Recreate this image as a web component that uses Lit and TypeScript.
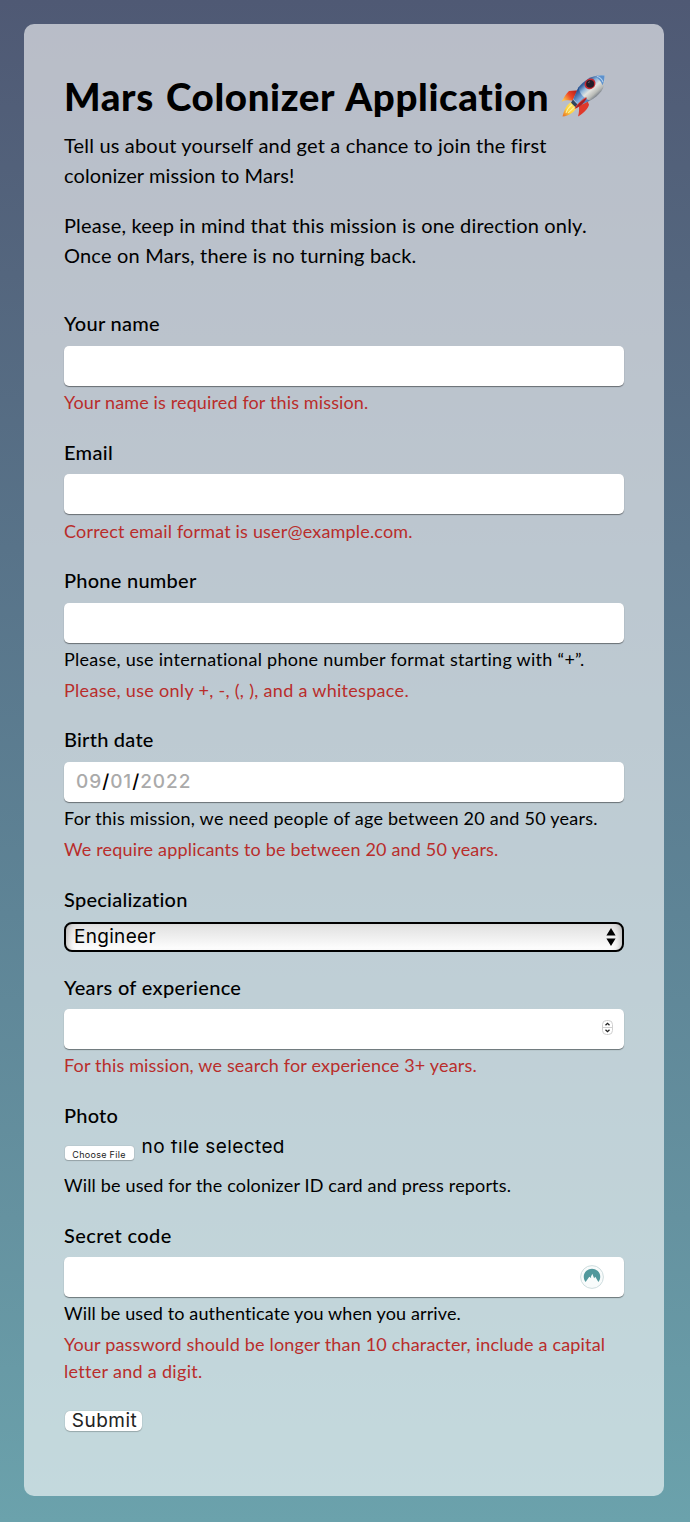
import { LitElement, html, css, svg, nothing } from "lit";
import { customElement } from "lit/decorators.js";
import { styleMap } from "lit/directives/style-map.js";

type Line = [text: string, tracking: number];

interface Field {
  label: Line;
  control: "text" | "date" | "select" | "number" | "file" | "password";
  hint?: Line;
  errors?: Line[];
}

const intro: Line[][] = [
  [
    ["Tell us about yourself and get a chance to join the first", 0.18],
    ["colonizer mission to Mars!", 0.09],
  ],
  [
    ["Please, keep in mind that this mission is one direction only.", 0.175],
    ["Once on Mars, there is no turning back.", 0.195],
  ],
];

const fields: Field[] = [
  {
    label: ["Your name", 0.309],
    control: "text",
    errors: [["Your name is required for this mission.", 0.135]],
  },
  {
    label: ["Email", 0.309],
    control: "text",
    errors: [["Correct email format is user@example.com.", 0.18]],
  },
  {
    label: ["Phone number", 0.25],
    control: "text",
    hint: ["Please, use international phone number format starting with “+”.", 0.28],
    errors: [["Please, use only +, -, (, ), and a whitespace.", 0.3]],
  },
  {
    label: ["Birth date", 0.23],
    control: "date",
    hint: ["For this mission, we need people of age between 20 and 50 years.", 0.245],
    errors: [["We require applicants to be between 20 and 50 years.", 0.174]],
  },
  { label: ["Specialization", 0.246], control: "select" },
  {
    label: ["Years of experience", 0.32],
    control: "number",
    errors: [["For this mission, we search for experience 3+ years.", 0.17]],
  },
  {
    label: ["Photo", 0.203],
    control: "file",
    hint: ["Will be used for the colonizer ID card and press reports.", 0.16],
  },
  {
    label: ["Secret code", 0.4],
    control: "password",
    hint: ["Will be used to authenticate you when you arrive.", 0.12],
    errors: [
      ["Your password should be longer than 10 character, include a capital", 0.178],
      ["letter and a digit.", 0.3],
    ],
  },
];

const line = ([text, tracking]: Line) =>
  html`<span class="line" style=${styleMap({ letterSpacing: `${tracking}px` })}>${text}</span>`;

const rocket = svg`
  <defs>
    <linearGradient id="hull" x1="21" y1="10" x2="33" y2="24" gradientUnits="userSpaceOnUse">
      <stop offset="0" stop-color="#345f9c" />
      <stop offset=".25" stop-color="#8fb5da" />
      <stop offset=".5" stop-color="#e2e3df" />
      <stop offset=".78" stop-color="#b9bbb7" />
      <stop offset="1" stop-color="#6c7480" />
    </linearGradient>
    <linearGradient id="band" x1="14" y1="17" x2="26" y2="30" gradientUnits="userSpaceOnUse">
      <stop offset="0" stop-color="#244d8d" />
      <stop offset=".5" stop-color="#85afe0" />
      <stop offset="1" stop-color="#315b9b" />
    </linearGradient>
    <linearGradient id="fin" x1="15" y1="15" x2="3" y2="25" gradientUnits="userSpaceOnUse">
      <stop offset="0" stop-color="#b51e1c" />
      <stop offset=".5" stop-color="#ec4524" />
      <stop offset="1" stop-color="#ffc44a" />
    </linearGradient>
    <linearGradient id="flame" x1="14" y1="28" x2="3" y2="40" gradientUnits="userSpaceOnUse">
      <stop offset="0" stop-color="#ffe66a" />
      <stop offset=".6" stop-color="#ffd139" />
      <stop offset="1" stop-color="#e9792d" />
    </linearGradient>
  </defs>
  <path d="M18 15 L8 15.5 C5 18 3 22 0.500 26 C5 24 9 25 13 25 Z" fill="url(#fin)" />
  <path d="M26 24 L28 29 C27 33 23 37 17 40.500 C18.500 36 18 33 18 29 Z" fill="#e0392b" />
  <path d="M11 26 C6 28 3 34 1.500 40.500 C8 40 14 36 16 31 Z" fill="url(#flame)" />
  <path d="M11 29 C8 31 6 34 5 37 M14 31 C11 33 9 36 7 37" stroke="#fff2a4" fill="none" />
  <path d="M12 24 L18 30 L15 32 L10 27 Z" fill="#31445e" />
  <path d="M43.500 0.500 C33 -1 23 5 17.500 12 L12 24 L18 30 C29 26 38 21 42 13 C43.500 8 43.800 4 43.500 .5 Z" fill="url(#hull)" />
  <path d="M17.500 12 L12.500 23.500 L18 30 L29 25 C23 23 18.500 18 17.500 12 Z" fill="url(#band)" />
  <path d="M43.500 .5 C40 .3 37 .8 34.500 2 C37 3 40 6 41.500 10 C43 7 43.700 4 43.500 .5 Z" fill="#5d91cd" />
  <path d="M36 1.500 C39 2 41 4 42 7" stroke="#b7d4ef" stroke-width="1" fill="none" />
  <path d="M26 22 C22 23 16 29 13.500 33 C18 32 24 27 26 22 Z" fill="#a91f24" />
  <path d="M25 22 C21 24 17 28 14 32" stroke="#ed5745" stroke-width=".8" fill="none" />
  <ellipse cx="29" cy="8.700" rx="5.700" ry="5" transform="rotate(-35 29 8.700)" fill="#c52a31" />
  <ellipse cx="29.100" cy="8.700" rx="4" ry="3.700" fill="#241c28" />
  <path d="M27 7.500 L29 6.500" stroke="#79616b" stroke-width=".8" />
`;

@customElement("app-root")
export class AppRoot extends LitElement {
  static styles = css`
    :host {
      display: block;
      box-sizing: border-box;
      min-height: 1522px;
      padding: 24px 26px 26px 24px;
      background: linear-gradient(#4f5974 0%, #54667e 18%, #587389 36%, #5e8496 60%, #6592a0 80%, #6ba2ac 100%);
      color: #000;
      font: 400 20px/30px Lato, sans-serif;
    }
    .card {
      box-sizing: border-box;
      height: 1472px;
      padding: 46px 40px 0;
      border-radius: 10px;
      background: rgba(255, 255, 255, 0.6);
    }
    .line {
      display: block;
      white-space: nowrap;
    }
    .title {
      display: flex;
      align-items: center;
      height: 52px;
      margin: 0 0 8px;
      font-size: 38.5px;
      line-height: 52px;
      font-weight: 900;
      letter-spacing: 0.6px;
      word-spacing: 2.5px;
      white-space: nowrap;
    }
    .rocket {
      width: 44px;
      height: 42px;
      margin-left: 12px;
    }
    .para {
      margin: 0 0 20px;
    }
    .form {
      padding-top: 18.2px;
    }
    .field {
      margin-bottom: 21.2px;
    }
    .label {
      display: block;
      height: 30px;
      margin-bottom: 7.4px;
      font-weight: 500;
    }
    .box {
      display: flex;
      align-items: center;
      justify-content: space-between;
      box-sizing: border-box;
      height: 40px;
      margin-bottom: 3.4px;
      padding: 0 12px;
      border-radius: 5px;
      background: #fff;
      box-shadow: 0 1px 1px rgba(0, 0, 0, 0.45);
    }
    .native {
      font: 400 19px/24px Inter, sans-serif;
    }
    .date {
      color: #aaa;
      letter-spacing: 0.95px;
      font-weight: 500;
    }
    .slash {
      color: #000;
    }
    .select {
      display: flex;
      align-items: center;
      justify-content: space-between;
      box-sizing: border-box;
      height: 30px;
      margin: 8px 0 -1.2px;
      padding: 0 6px 0 8px;
      border: 2px solid #000;
      border-radius: 8px;
      background: linear-gradient(#e0e0e0, #f2f2f2 60%, #fff);
      box-shadow: inset 7px 0 7px -6px rgba(0, 0, 0, 0.28), inset -7px 0 7px -6px rgba(0, 0, 0, 0.28);
      letter-spacing: 0.3px;
    }
    .arrows {
      width: 10px;
      height: 18px;
    }
    .spinner {
      width: 11px;
      height: 15px;
      margin-right: -1px;
      margin-top: -3px;
    }
    .key {
      width: 24px;
      height: 24px;
      margin-right: 8px;
    }
    .file {
      display: flex;
      align-items: flex-start;
      height: 27px;
      margin-bottom: 7.2px;
      padding-top: 2.3px;
      box-sizing: border-box;
    }
    .choose {
      box-sizing: border-box;
      width: 69px;
      height: 14px;
      margin: 6px 0 0 0.5px;
      border-radius: 3px;
      background: #fff;
      box-shadow: 0 0 1px rgba(0, 0, 0, 0.35), 0 1px 1px rgba(0, 0, 0, 0.2);
      color: #222;
      font: 400 9px/18px Inter, sans-serif;
      letter-spacing: 0.3px;
      text-align: center;
      overflow: hidden;
    }
    .status {
      display: flex;
      align-items: flex-end;
      height: 19px;
      margin-left: 8px;
      overflow: hidden;
      letter-spacing: 0.4px;
    }
    .note {
      margin: 0;
      font-size: 18px;
      line-height: 26.6px;
    }
    .note + .note {
      margin-top: 4px;
    }
    .error {
      color: #b92d2b;
    }
    .submit {
      display: flex;
      align-items: center;
      justify-content: center;
      box-sizing: border-box;
      width: 77px;
      height: 20px;
      margin: 27px 0 0 1px;
      padding: 0 0 0 2px;
      border: 0;
      border-radius: 5px;
      background: #fff;
      box-shadow: 0 0 1px rgba(0, 0, 0, 0.3), 0 1px 1px rgba(0, 0, 0, 0.2);
      color: #222;
      letter-spacing: 0.5px;
    }
  `;

  private control(kind: Field["control"]) {
    switch (kind) {
      case "date":
        return html`<div class="box native">
          <span class="date">09<span class="slash">/</span>01<span class="slash">/</span>2022</span>
        </div>`;
      case "select":
        return html`<div class="select native">
          <span>Engineer</span>
          <svg class="arrows" viewBox="0 0 10 18"><path d="M5 0 L9.600 7.500 H.4 Z M.4 10.500 H9.600 L5 18 Z" /></svg>
        </div>`;
      case "number":
        return html`<div class="box">
          <span></span>
          <svg class="spinner" viewBox="0 0 11 15" fill="none">
            <rect x=".5" y=".5" width="10" height="14" rx="4" fill="#fff" stroke="#d0d0d0" />
            <path d="M.5 7.500 H10.500" stroke="#d0d0d0" />
            <path d="M3.500 5.300 L5.500 3.300 L7.500 5.300 M3.500 9.700 L5.500 11.700 L7.500 9.700" stroke="#222" stroke-width="1.300" />
          </svg>
        </div>`;
      case "file":
        return html`<div class="file">
          <div class="choose">Choose File</div>
          <div class="status native">no file selected</div>
        </div>`;
      case "password":
        return html`<div class="box">
          <span></span>
          <svg class="key" viewBox="0 0 24 24">
            <circle cx="12" cy="12" r="11.400" fill="#f8fbfb" stroke="#cfdddf" />
            <path
              d="M5.600 17 C2.800 13.500 3.200 8.500 6.500 5.800 C9.700 3.100 14.300 3.100 17.500 5.800 C20.800 8.500 21.200 13.500 18.400 17 L15.300 11.800 L14.100 13.300 L12.300 8.800 L10.800 11.900 L11.300 13.300 L9.300 11.700 Z"
              fill="#51989c"
            />
          </svg>
        </div>`;
      default:
        return html`<div class="box"></div>`;
    }
  }

  render() {
    return html`
      <main class="card">
        <h1 class="title">
          <span>Mars Colonizer Application</span>
          <svg class="rocket" viewBox="0 0 44 41" preserveAspectRatio="none">${rocket}</svg>
        </h1>
        ${intro.map((p) => html`<p class="para">${p.map(line)}</p>`)}
        <div class="form">
          ${fields.map(
            (f) => html`<div class="field">
              <div class="label">${line(f.label)}</div>
              ${this.control(f.control)}
              ${f.hint ? html`<p class="note">${line(f.hint)}</p>` : nothing}
              ${f.errors ? html`<p class="note error">${f.errors.map(line)}</p>` : nothing}
            </div>`,
          )}
        </div>
        <button class="submit native">Submit</button>
      </main>
    `;
  }
}
